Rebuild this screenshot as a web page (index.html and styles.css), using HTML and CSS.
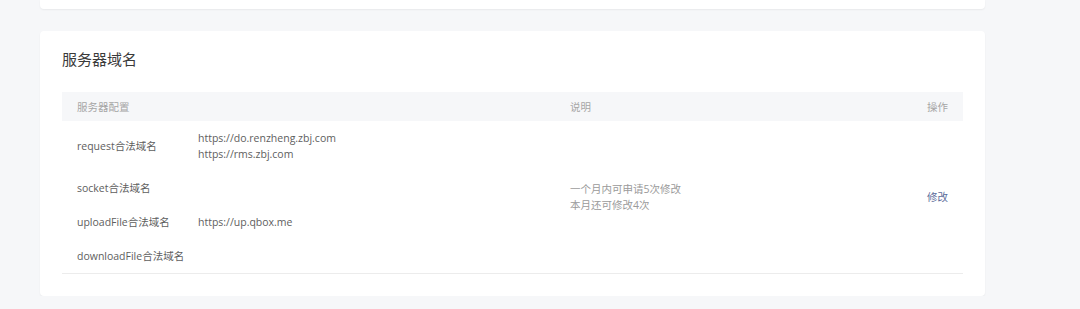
FILE: index.html
```html
<!DOCTYPE html>
<html lang="zh-CN">
<head>
    <meta charset="UTF-8">
    <title>服务器域名</title>
    <link rel="stylesheet" href="styles.css">
</head>
<body>
    <div class="page">
        <div class="card card-top"></div>

        <div class="card">
            <h2 class="card-title">服务器域名</h2>
            <table class="domain-table">
                <colgroup>
                    <col class="col-name">
                    <col class="col-url">
                    <col class="col-desc">
                    <col class="col-op">
                </colgroup>
                <thead>
                    <tr>
                        <th>服务器配置</th>
                        <th></th>
                        <th>说明</th>
                        <th class="op">操作</th>
                    </tr>
                </thead>
                <tbody>
                    <tr>
                        <td>request合法域名</td>
                        <td class="url">
                            <div>https://do.renzheng.zbj.com</div>
                            <div>https://rms.zbj.com</div>
                        </td>
                        <td class="desc" rowspan="4">
                            <div>一个月内可申请5次修改</div>
                            <div>本月还可修改4次</div>
                        </td>
                        <td class="op" rowspan="4"><a href="#" class="link">修改</a></td>
                    </tr>
                    <tr>
                        <td>socket合法域名</td>
                        <td class="url"></td>
                    </tr>
                    <tr>
                        <td>uploadFile合法域名</td>
                        <td class="url">https://up.qbox.me</td>
                    </tr>
                    <tr class="last">
                        <td>downloadFile合法域名</td>
                        <td class="url"></td>
                    </tr>
                </tbody>
            </table>
        </div>
    </div>
</body>
</html>
```

FILE: styles.css
```css
body {
    margin: 0;
    background-color: #f6f7f9;
    font-family: "Open Sans", "Noto Sans CJK SC", sans-serif;
    color: #5e5e5e;
}
.page {
    width: 945px;
    margin-left: 40px;
}
.card {
    background-color: white;
    border-radius: 4px;
    box-shadow: 0 1px 2px rgba(0, 0, 0, 0.06);
    padding: 16px 22px 22px;
}
.card-top {
    height: 9px;
    padding: 0;
    border-radius: 0 0 4px 4px;
    margin-bottom: 22px;
}
.card-title {
    margin: 0 0 21px;
    font-size: 15px;
    line-height: 24px;
    font-weight: normal;
    color: #3a3a3a;
}
.domain-table {
    width: 100%;
    table-layout: fixed;
    border-collapse: collapse;
    font-size: 10.5px;
    line-height: 16px;
}
.col-name {
    width: 121px;
}
.col-url {
    width: 372px;
}
.col-op {
    width: 100px;
}
.domain-table th {
    background-color: #f6f7f9;
    color: #a6a6a6;
    font-weight: normal;
    text-align: left;
    height: 29px;
    padding: 0 15px;
}
.domain-table td {
    padding: 9px 15px;
    vertical-align: middle;
    white-space: nowrap;
}
.domain-table tbody tr.last td,
.domain-table td[rowspan] {
    border-bottom: 1px solid #ececec;
}
.domain-table td.desc {
    color: #9a9a9a;
}
.domain-table .op {
    text-align: right;
}
.link {
    color: #5b6b9a;
    text-decoration: none;
}
```
